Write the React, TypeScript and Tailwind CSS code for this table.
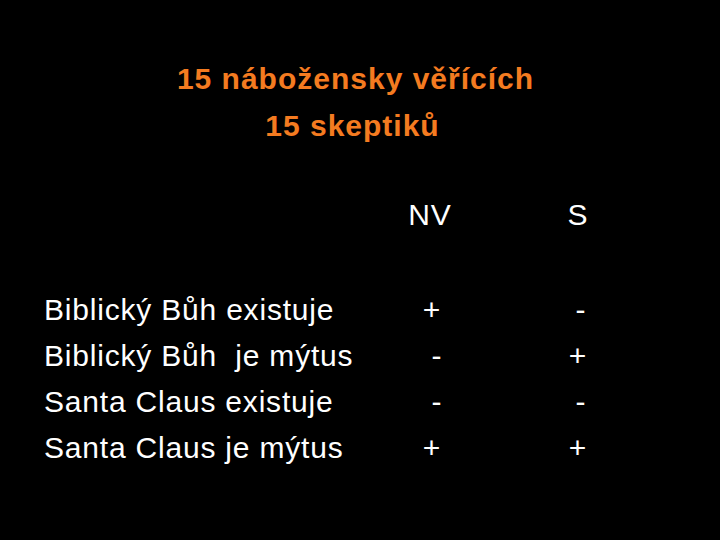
export default function App() {
  const rows: { label: string; nv: string; s: string; nvc: string; sc: string }[] = [
    { label: "Biblický Bůh existuje", nv: "+", s: "-", nvc: "pl-[4px]", sc: "pl-[6px]" },
    { label: "Biblický Bůh  je mýtus", nv: "-", s: "+", nvc: "pl-[14px]", sc: "pl-[0px]" },
    { label: "Santa Claus existuje", nv: "-", s: "-", nvc: "pl-[14px]", sc: "pl-[6px]" },
    { label: "Santa Claus je mýtus", nv: "+", s: "+", nvc: "pl-[4px]", sc: "pl-[0px]" },
  ];
  return (
    <div
      className="w-[720px] h-[540px] bg-black overflow-hidden"
      style={{ fontFamily: '"Liberation Sans", Arial, sans-serif' }}
    >
      <div className="pt-[55px] pr-[9px] flex flex-col items-center text-[#f47b20] font-bold text-[30px] tracking-[1px] leading-[47px]">
        <div>15 nábožensky věřících</div>
        <div className="pr-[6px]">15 skeptiků</div>
      </div>
      <div className="mt-[43px] pl-[44px] text-white text-[30px] tracking-[0.8px] leading-[46px]">
        <div className="flex">
          <div className="w-[340px]" />
          <div className="w-[92px] text-center">NV</div>
          <div className="w-[52px]" />
          <div className="w-[100px] text-center">S</div>
        </div>
        <div className="mt-[49px] flex flex-col">
          {rows.map((r) => (
            <div key={r.label} className="flex">
              <div className="w-[340px] whitespace-pre">{r.label}</div>
              <div className={`w-[92px] text-center ${r.nvc}`}>{r.nv}</div>
              <div className="w-[52px]" />
              <div className={`w-[100px] text-center ${r.sc}`}>{r.s}</div>
            </div>
          ))}
        </div>
      </div>
    </div>
  );
}
